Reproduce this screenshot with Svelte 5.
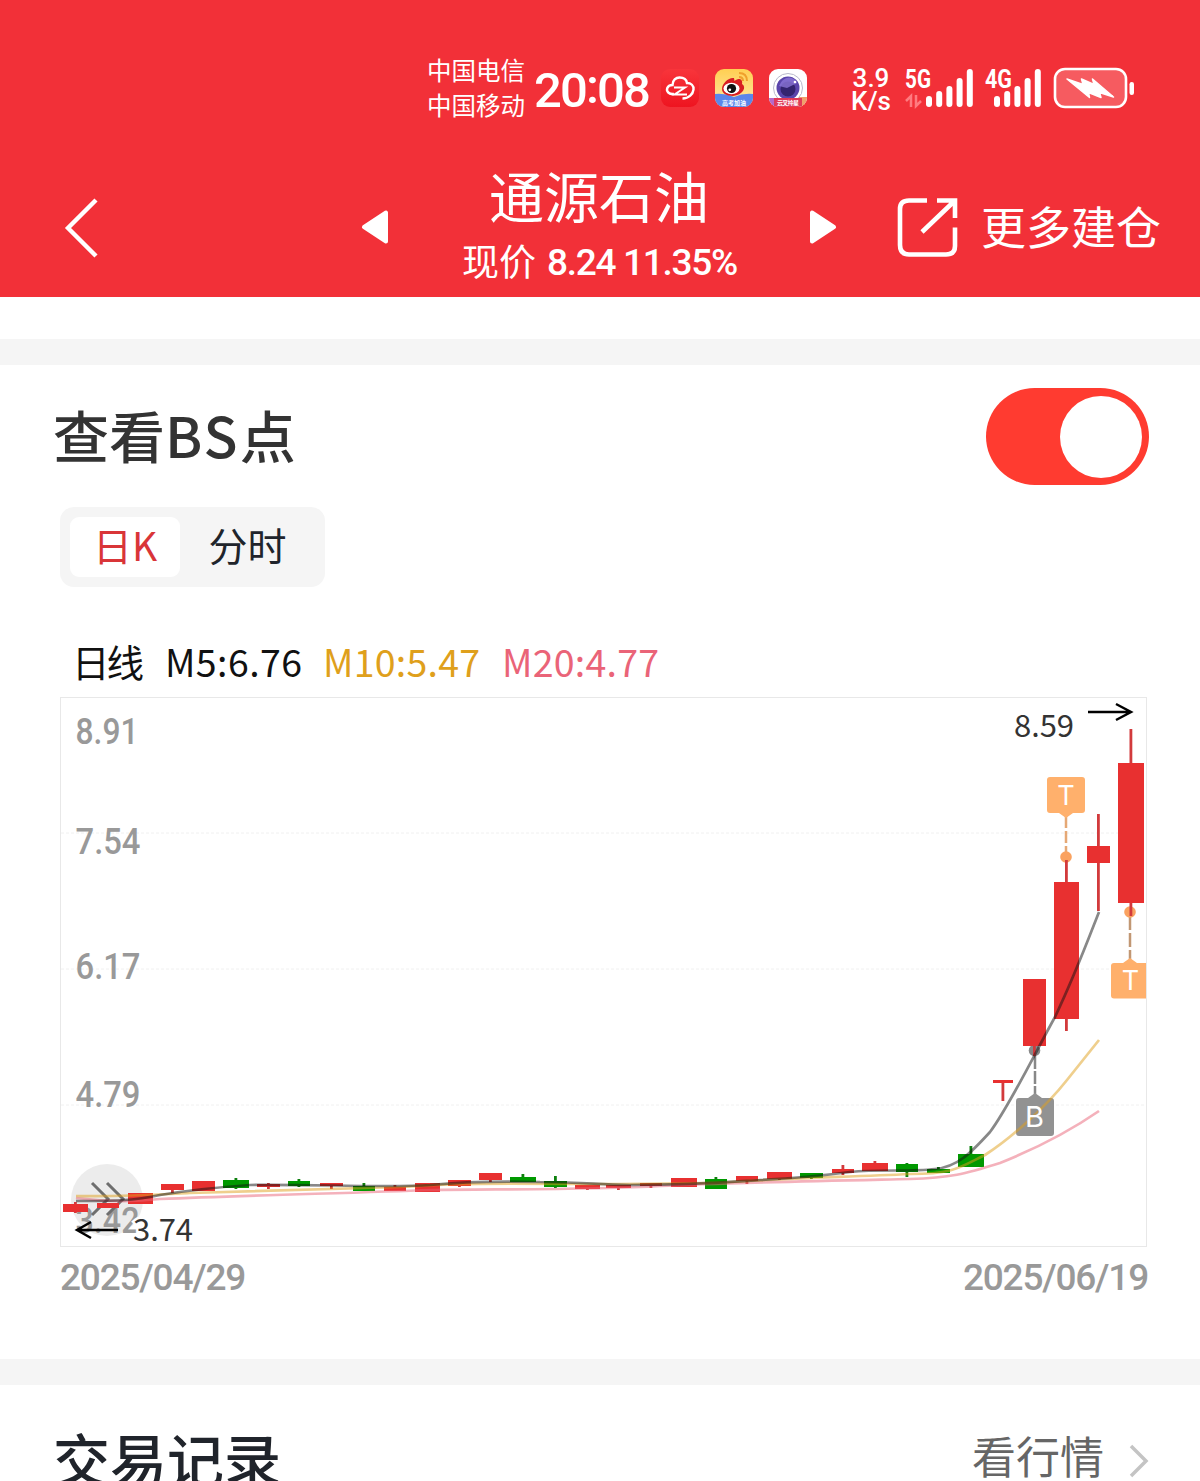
<script>
  const candles = [
    [63, 88, 1204, 1212, 1202, 1213, 'up'],
    [97, 119, 1203, 1208, 1203, 1208, 'up'],
    [128, 153, 1193, 1204, 1193, 1204, 'up'],
    [161, 184, 1184, 1190, 1184, 1193, 'up'],
    [192, 215, 1181, 1191, 1181, 1191, 'up'],
    [223, 249, 1180, 1188, 1178, 1189, 'down'],
    [257, 280, 1184, 1187, 1183, 1189, 'up'],
    [288, 310, 1181, 1186, 1179, 1187, 'down'],
    [320, 343, 1183, 1186, 1183, 1189, 'up'],
    [353, 375, 1186, 1191, 1183, 1191, 'down'],
    [384, 406, 1187, 1191, 1185, 1191, 'up'],
    [415, 440, 1183, 1192, 1183, 1192, 'up'],
    [448, 471, 1180, 1186, 1180, 1187, 'up'],
    [479, 502, 1173, 1180, 1173, 1182, 'up'],
    [510, 536, 1177, 1182, 1174, 1182, 'down'],
    [544, 567, 1181, 1187, 1176, 1188, 'down'],
    [575, 600, 1185, 1189, 1185, 1190, 'up'],
    [606, 631, 1185, 1188, 1185, 1190, 'up'],
    [640, 662, 1183, 1186, 1183, 1188, 'up'],
    [671, 697, 1178, 1187, 1178, 1187, 'up'],
    [705, 727, 1179, 1189, 1177, 1189, 'down'],
    [736, 758, 1176, 1181, 1176, 1184, 'up'],
    [767, 792, 1172, 1179, 1172, 1180, 'up'],
    [800, 823, 1173, 1178, 1173, 1179, 'down'],
    [832, 854, 1169, 1173, 1165, 1175, 'up'],
    [862, 888, 1163, 1171, 1161, 1171, 'up'],
    [896, 918, 1164, 1172, 1163, 1177, 'down'],
    [927, 950, 1169, 1173, 1167, 1173, 'down'],
    [958, 984, 1154, 1167, 1146, 1167, 'down'],
    [993, 1013, 1080, 1083, 1080, 1101, 'up'],
    [1023, 1046, 979, 1046, 979, 1056, 'up'],
    [1054, 1079, 882, 1019, 860, 1031, 'up'],
    [1087, 1110, 846, 863, 814, 911, 'up'],
    [1118, 1144, 763, 903, 729, 916, 'up'],
  ]

  const prices = [
    ['8.91', 744, 63],
    ['7.54', 854, 65],
    ['6.17', 979, 65],
    ['4.79', 1107, 65],
    ['3.42', 1233, 64],
  ]

  const gridLines = [833, 969, 1105]

  const bars = [11, 16, 21, 29, 38]

  let showPoints = $state(true)
  let tab = $state('day')
</script>

<div class="page">
  <header class="header">
    <div class="status">
      <div class="carriers">
        <span>中国电信</span>
        <span>中国移动</span>
      </div>
      <span class="clock">20<i>:</i>08</span>
      <div class="apps">
        <svg viewBox="0 0 38 38" class="app">
          <defs>
            <linearGradient id="appRed" x2="0" y2="1">
              <stop offset="0" stop-color="#f8353b" />
              <stop offset="1" stop-color="#ee1420" />
            </linearGradient>
          </defs>
          <rect width="38" height="38" rx="9" fill="url(#appRed)" />
          <path d="M13 25C8 25.500 5 22.500 6.300 19C7.200 16.500 9.500 16 11.500 16C11.500 11 15 8.500 18.500 8.500C22.500 8.500 25.500 10.500 26 14C30 14 33 16.500 32.500 20.500C32 25 28 29.500 21.500 29.500" fill="none" stroke="#fff" stroke-width="2.400" />
          <path d="M13 18.500H24L13.500 25.500H26" fill="none" stroke="#fff" stroke-width="2" />
        </svg>
        <svg viewBox="0 0 38 38" class="app">
          <defs>
            <clipPath id="appClip"><rect width="38" height="38" rx="9" /></clipPath>
            <linearGradient id="appYellow" x2="0" y2="1">
              <stop offset="0" stop-color="#ffcf52" />
              <stop offset="1" stop-color="#ffe9a8" />
            </linearGradient>
          </defs>
          <g clip-path="url(#appClip)">
            <rect width="38" height="38" fill="url(#appYellow)" />
            <path d="M0 25Q10 24 19 28Q28 24 38 25V38H0Z" fill="#5b86ea" />
            <path d="M7 20C7 14 14 8 19 9L19.500 12C25 8 28 11 27 15C32 18 28 26 18 27C11 27 7 24 7 20Z" fill="#d81e22" />
            <ellipse cx="16.500" cy="19.500" rx="8" ry="5.800" fill="#fff" />
            <circle cx="16.500" cy="19.500" r="4.600" fill="#111" />
            <circle cx="14.800" cy="20.800" r="1.400" fill="#fff" />
            <path d="M24 4Q32 4 32 12M24 8Q28 8 28 12" fill="none" stroke="#f0a02c" stroke-width="2" />
            <text x="19" y="35.500" class="app-label" textLength="24">高考加油</text>
          </g>
        </svg>
        <svg viewBox="0 0 38 38" class="app">
          <g clip-path="url(#appClip)">
            <rect width="38" height="38" fill="#fff" />
            <circle cx="19" cy="19" r="14.500" fill="none" stroke="#b9b9cb" />
            <circle cx="19" cy="19" r="11.500" fill="#5a45ab" />
            <circle cx="19" cy="20" r="7.500" fill="#33246f" />
            <path d="M10 17Q13 9 20 8.500Q26 9 28 14L18 19Z" fill="#8a74d6" opacity=".8" />
            <circle cx="26" cy="13" r="1.300" fill="#fff" />
            <rect y="29" width="8" height="9" fill="#b569c8" />
            <rect x="30" y="28" width="8" height="10" fill="#f0a06c" />
            <rect x="5" y="29" width="28" height="9" fill="#e03a58" />
            <text x="19" y="35.500" class="app-label" textLength="22">云叉拎星</text>
          </g>
        </svg>
      </div>
      <div class="speed">
        <span>3.9</span>
        <span>K/s</span>
      </div>
      <svg class="signal" viewBox="905 66 70 44">
        <text x="905" y="87.500" class="net" textLength="26" lengthAdjust="spacingAndGlyphs">5G</text>
        <path d="M906 101L911 96V107M916 95V106L921 101" stroke="#ff7b80" stroke-width="2.500" fill="none" />
        {#each bars as h, i}
          <rect x={926 + i * 10.2} y={107 - h} width="6" height={h} rx="3" fill="#fff" />
        {/each}
      </svg>
      <svg class="signal four" viewBox="985 66 58 44">
        <text x="985" y="87.500" class="net" textLength="27" lengthAdjust="spacingAndGlyphs">4G</text>
        {#each bars as h, i}
          <rect x={994 + i * 10.2} y={107 - h} width="6" height={h} rx="3" fill="#fff" />
        {/each}
      </svg>
      <svg class="battery" viewBox="1053 66 84 44">
        <rect x="1055" y="69" width="71" height="38" rx="10" fill="#f65b60" stroke="#fff" stroke-width="2.600" />
        <rect x="1129.500" y="82" width="4.500" height="13" rx="2.200" fill="#fff" />
        <path d="M1067 79L1083 84.500L1081.500 79L1094 84.500L1092.500 79L1113.500 97L1099.500 92.500L1101 97.500L1088.500 92.500L1089.500 97.500Z" fill="#fff" stroke="#fff" stroke-width="1.500" stroke-linejoin="round" />
      </svg>
    </div>

    <nav class="nav">
      <svg class="back" viewBox="0 0 40 64">
        <path d="M36 4L8 32L36 60" fill="none" stroke="#fff" stroke-width="4.400" />
      </svg>
      <svg class="prev" viewBox="0 0 28 34">
        <path d="M3 17L25 2.500V31.500Z" class="tri" />
      </svg>
      <div class="stock">
        <h1>通源石油</h1>
        <p><span>现价</span><b>8.24 11.35%</b></p>
      </div>
      <svg class="next" viewBox="0 0 28 34">
        <path d="M25 17L3 2.500V31.500Z" class="tri" />
      </svg>
      <svg class="share" viewBox="897 197 62 62">
        <path d="M927 200.500H909Q900 200.500 900 209V245Q900 254.500 909 254.500H946Q955 254.500 955 246V227.500M937 200.500H955V218M955 200.500L922 232" fill="none" stroke="#fff" stroke-width="4.600" />
      </svg>
      <span class="more">更多建仓</span>
    </nav>
  </header>

  <section class="panel">
    <div class="switch-row">
      <h2>查看<b>BS</b>点</h2>
      <button class="switch" class:switch--on={showPoints} aria-label="BS" onclick={() => (showPoints = !showPoints)}>
        <i></i>
      </button>
    </div>

    <div class="tabs">
      <button class:active={tab === 'day'} onclick={() => (tab = 'day')}>日K</button>
      <button class:active={tab === 'time'} onclick={() => (tab = 'time')}>分时</button>
    </div>

    <svg class="legend" viewBox="60 632 1088 64">
      <text x="72" y="677" textLength="72" fill="#111">日线</text>
      <text x="165" y="677" textLength="137" fill="#111">M5:6.76</text>
      <text x="323" y="677" textLength="157" fill="#dfa01c">M10:5.47</text>
      <text x="502" y="677" textLength="157" fill="#ea6478">M20:4.77</text>
    </svg>

    <svg class="chart" viewBox="60 697 1088 550">
      <rect x="60.500" y="697.500" width="1086" height="549" fill="#fff" stroke="#e8e8e8" />
      {#each gridLines as y}
        <line x1="61" x2="1146" y1={y} y2={y} stroke="#f0f0f0" stroke-dasharray="3 2" />
      {/each}

      <circle cx="107" cy="1200" r="36" fill="#ececec" />
      {#each prices as [label, y, width]}
        <text x="75.500" {y} class="price" textLength={width} lengthAdjust="spacingAndGlyphs">{label}</text>
      {/each}
      <path d="M92 1183L108 1199L92 1215M107 1183L123 1199L107 1215" fill="none" stroke="#6e6e6e" stroke-width="3" />

      {#if showPoints}
        <g class="mark">
          <path d="M1066 816V852" stroke-dasharray="12 3" />
          <circle cx="1066" cy="857" r="5.800" />
          <path class="box" d="M1050 777H1082Q1085 777 1085 780V810Q1085 813 1082 813H1073L1066 818L1059 813H1050Q1047 813 1047 810V780Q1047 777 1050 777Z" />
          <text x="1066" y="805">T</text>
        </g>
        <g class="mark">
          <path d="M1130 916V960" stroke-dasharray="14 3" style:stroke="#c19773" />
          <circle cx="1130" cy="912" r="5.800" />
          <path class="box" d="M1146 998.500H1114Q1111 998.500 1111 995.500V966Q1111 963 1114 963H1123L1130 958L1137 963H1146Z" />
          <text x="1130.500" y="990">T</text>
        </g>
        <g class="mark mark--buy">
          <circle cx="1034.500" cy="1050.500" r="5.800" />
          <path d="M1035 1056V1094" stroke-dasharray="13 2" />
          <path class="box" d="M1019 1098H1028L1035 1093L1042 1098H1051Q1054 1098 1054 1101V1133Q1054 1136 1051 1136H1019Q1016 1136 1016 1133V1101Q1016 1098 1019 1098Z" />
        </g>
      {/if}

      {#each candles as [x1, x2, top, bottom, high, low, dir]}
        <g class={dir}>
          <rect class="wick" x={(x1 + x2) / 2 - 1.5} y={high} width="2.8" height={low - high} />
          <rect x={x1} y={top} width={x2 - x1} height={bottom - top} />
        </g>
      {/each}

      <path class="ma" stroke="#ea6478" d="M76 1198C100 1201 125 1203 160 1199C250 1195 360 1193 430 1190C500 1189 590 1190 660 1186C720 1183 820 1181 910 1179C950 1178 965 1174 1000 1163C1035 1149 1070 1131 1099 1111" />
      <path class="ma" stroke="#dfa01c" d="M76 1196C120 1197 150 1195 190 1193C260 1191 330 1189 400 1187C440 1184 500 1183 560 1184C620 1184 690 1184 730 1182C790 1178 850 1177 910 1174C955 1174 960 1167 985 1155C1010 1139 1045 1108 1067 1080L1099 1040" />
      <path class="ma" stroke="#111" d="M76 1201C110 1201 135 1201 160 1195C190 1190 220 1187 250 1185C310 1184 390 1188 430 1185C470 1181 500 1181 540 1182C590 1182 595 1185 630 1185C700 1185 730 1182 760 1180C800 1178 820 1176 850 1172C880 1169 910 1172 935 1169C957 1167 970 1154 990 1132C1010 1105 1035 1053 1055 1017C1075 975 1088 940 1099 912" />

      {#if showPoints}
        <text x="1034.500" y="1127" class="buy">B</text>
      {/if}

      <text x="1014" y="737" class="extreme" textLength="60">8.59</text>
      <path class="arrow" d="M1088 712H1131M1116 704L1131 712L1116 720" />
      <text x="133" y="1241" class="extreme" textLength="60">3.74</text>
      <path class="arrow" d="M118 1230H77M91 1222L77 1230L91 1238" />
    </svg>

    <div class="dates">
      <span>2025/04/29</span>
      <span>2025/06/19</span>
    </div>
  </section>

  <section class="records">
    <h2>交易记录</h2>
    <span>看行情</span>
    <svg viewBox="0 0 22 36">
      <path d="M3 3L18 18L3 33" fill="none" stroke="#c4c4c4" stroke-width="3.500" />
    </svg>
  </section>
</div>

<style>
:global(body) {
  background: #fff;
  overflow: hidden;
}

.page {
  width: 1200px;
  height: 1481px;
  overflow: hidden;
  background: #fff;
  font-family: "Noto Sans CJK SC", sans-serif;
}

h1, h2, p {
  margin: 0;
  font-weight: 400;
}

svg {
  display: block;
  flex: none;
}

button {
  border: 0;
  padding: 0;
  font-family: inherit;
}

.header {
  height: 297px;
  background: #f23038;
  color: #fff;
}

.status {
  display: flex;
  align-items: flex-start;
  height: 150px;
  padding: 52px 0 0 427px;
  box-sizing: border-box;
}

.carriers {
  display: flex;
  flex-direction: column;
  width: 107px;
  font-size: 24.5px;
  line-height: 35px;
}

.clock {
  width: 127px;
  margin-top: 10px;
  font: 500 49px/58px Roboto, sans-serif;
  letter-spacing: -1.9px;
  white-space: nowrap;
}

.clock i {
  position: relative;
  top: -4px;
  font-style: normal;
}

.apps {
  display: flex;
  gap: 16px;
  width: 190px;
  margin-top: 17px;
}

.app {
  width: 38px;
  height: 38px;
}

.app-label {
  font-size: 6px;
  font-weight: 700;
  fill: #fff;
  text-anchor: middle;
}

.speed {
  display: flex;
  flex-direction: column;
  align-items: center;
  width: 40px;
  margin: 15px 14px 0 0;
  font: 500 26px/23px Roboto, sans-serif;
}

.signal {
  width: 70px;
  height: 44px;
  margin: 14px 10px 0 0;
}

.four {
  width: 58px;
}

.net {
  font: 700 25px Roboto, sans-serif;
  fill: #fff;
}

.battery {
  width: 84px;
  height: 44px;
  margin-top: 14px;
}

.nav {
  display: flex;
  align-items: flex-start;
  padding-left: 60px;
}

.back {
  width: 40px;
  height: 64px;
  margin: 46px 261px 0 0;
}

.prev,
.next {
  width: 28px;
  height: 34px;
  margin-top: 60px;
}

.tri {
  fill: #fff;
  stroke: #fff;
  stroke-width: 4;
  stroke-linejoin: round;
}

.stock {
  width: 420px;
  text-align: center;
}

.stock h1 {
  margin-top: 7px;
  font-size: 55px;
  line-height: 74px;
}

.stock p {
  display: flex;
  justify-content: center;
  gap: 11px;
  margin-left: 1px;
  font-size: 37px;
  line-height: 58px;
}

.stock b {
  font: 500 37px/64px Roboto, sans-serif;
  letter-spacing: -1.3px;
}

.share {
  width: 62px;
  height: 62px;
  margin: 47px 22px 0 60px;
}

.more {
  margin-top: 46px;
  font-size: 45px;
  line-height: 60px;
  white-space: nowrap;
}

.panel {
  margin-top: 42px;
  padding: 0 52px 0 60px;
  border-top: 26px solid #f5f5f5;
  height: 994px;
}

.switch-row {
  display: flex;
  justify-content: space-between;
  height: 142px;
  margin: 0 -1px 0 -7px;
}

.switch-row h2 {
  margin-top: 29px;
  font-size: 56px;
  font-weight: 500;
  line-height: 80px;
  color: #333;
}

.switch-row b {
  font-weight: 500;
  letter-spacing: 2.2px;
}

.switch {
  display: flex;
  align-items: center;
  width: 163px;
  height: 97px;
  margin-top: 23px;
  padding: 0 7px;
  border-radius: 49px;
  background: #ccc;
}

.switch--on {
  justify-content: flex-end;
  background: #ff3b30;
}

.switch i {
  width: 82px;
  height: 82px;
  border-radius: 50%;
  background: #fff;
}

.tabs {
  display: flex;
  width: 265px;
  height: 80px;
  padding: 10px;
  box-sizing: border-box;
  border-radius: 14px;
  background: #f5f5f5;
}

.tabs button {
  width: 110px;
  height: 60px;
  padding-bottom: 6px;
  border-radius: 9px;
  background: none;
  color: #20242b;
  font-size: 39px;
  line-height: 54px;
}

.tabs button:last-child {
  width: 135px;
}

.tabs .active {
  background: #fff;
  color: #d93538;
}

.legend {
  width: 1088px;
  height: 64px;
  margin: 45px 0 1px;
  font-size: 37.5px;
}

.chart {
  width: 1088px;
  height: 550px;
}

.price {
  font: 500 36.5px Roboto, sans-serif;
  fill: #999;
}

.up { fill: #e83030; }
.down { fill: #009900; }
.up .wick { fill: #d23a3c; }
.down .wick { fill: #0d800d; }

.ma {
  fill: none;
  stroke-width: 2.7;
  opacity: .5;
}

.mark path {
  stroke: #e5a875;
  stroke-width: 2.5;
}

.mark .box {
  fill: #ffb06c;
  stroke: none;
}

.mark circle {
  fill: #faa260;
}

.mark text,
.buy {
  fill: #fff;
  font: 27px Inter, sans-serif;
  text-anchor: middle;
}

.buy {
  font-size: 29px;
}

.mark--buy path { stroke: #888; }
.mark--buy .box { fill: #929292; }
.mark--buy circle { fill: #888; }

.extreme {
  font-size: 31px;
  fill: #333;
  stroke: #fff;
  stroke-width: 5;
  paint-order: stroke;
}

.arrow {
  fill: none;
  stroke: #000;
  stroke-width: 2.5;
}

.dates {
  display: flex;
  justify-content: space-between;
  margin-top: 9px;
  font: 500 37px/44px Roboto, sans-serif;
  letter-spacing: -1.2px;
  color: #999;
}

.records {
  display: flex;
  align-items: flex-start;
  height: 96px;
  border-top: 26px solid #f5f5f5;
  padding: 0 50px 0 53px;
}

.records h2 {
  flex: 1;
  margin-top: 32px;
  font-size: 57px;
  font-weight: 500;
  line-height: 80px;
  color: #20242b;
}

.records span {
  margin: 38px 24px 0 0;
  font-size: 44px;
  line-height: 64px;
  color: #666;
}

.records svg {
  width: 22px;
  height: 36px;
  margin-top: 58px;
}
</style>
